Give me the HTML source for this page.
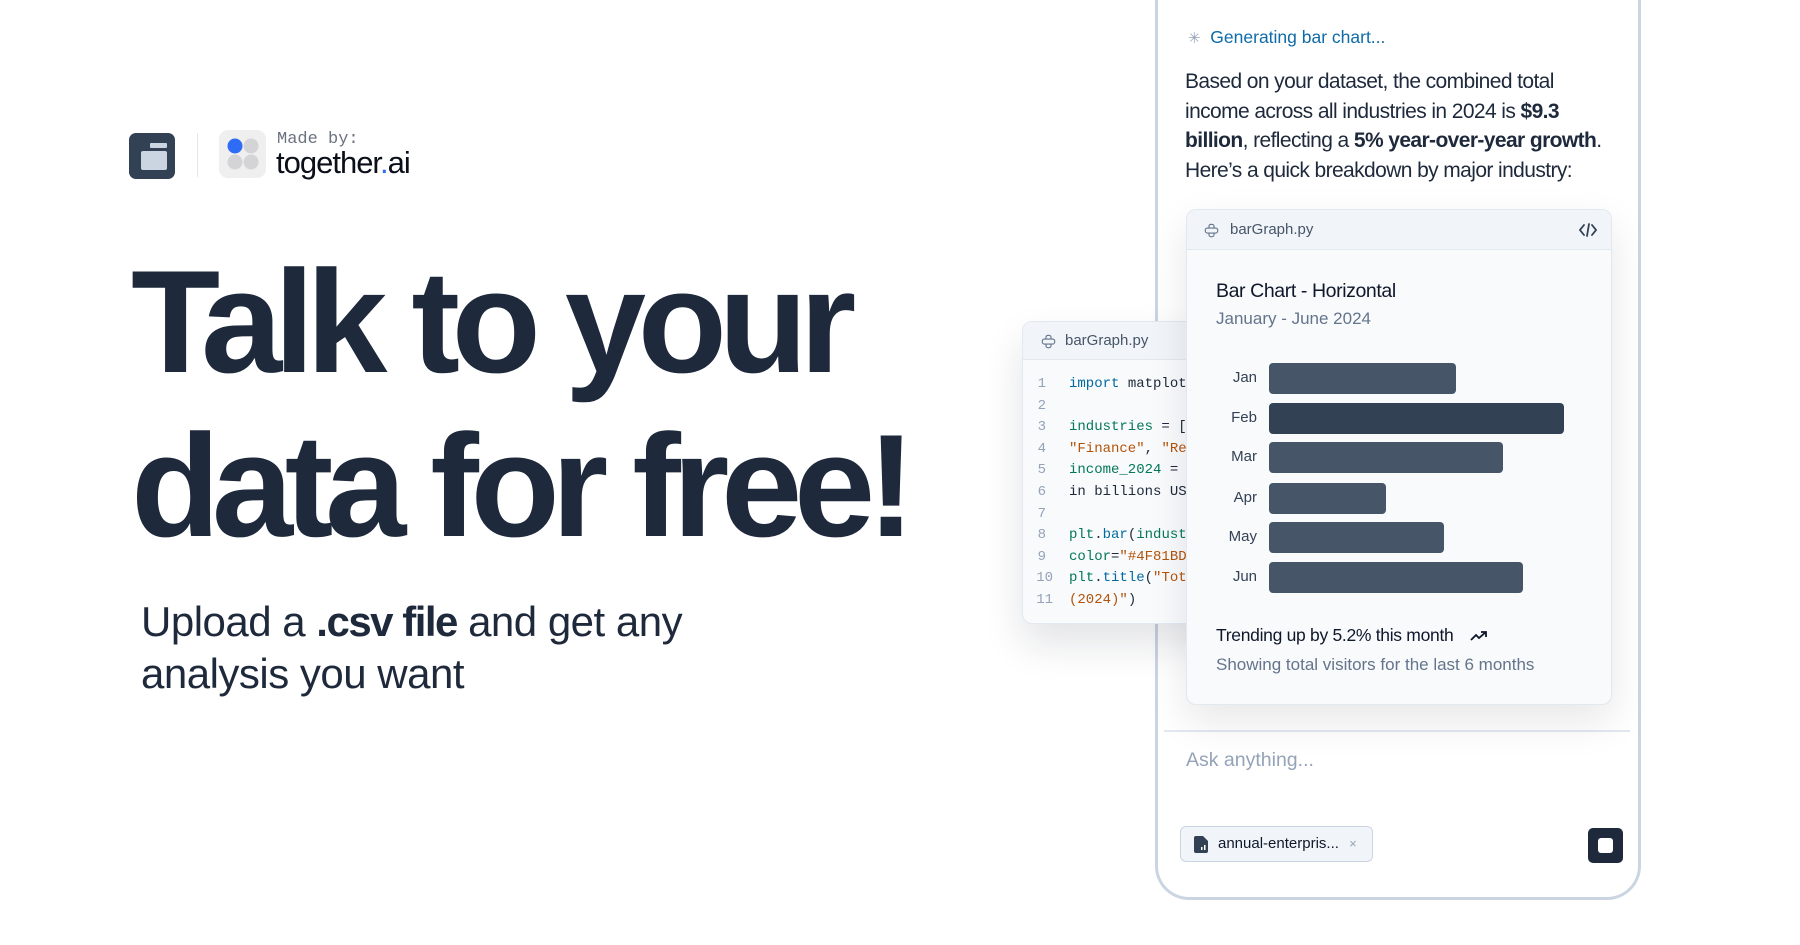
<!DOCTYPE html>
<html><head><meta charset="utf-8"><style>
*{margin:0;padding:0;box-sizing:border-box}
body{width:1800px;height:945px;background:#fff;font-family:"Liberation Sans",sans-serif;position:relative;overflow:hidden;color:#1e293b}
.abs{position:absolute}
.h1{left:131px;font-size:146px;font-weight:700;letter-spacing:-8.3px;color:#1e293b;line-height:1;white-space:nowrap}
.sub{left:141px;font-size:42px;color:#1e293b;line-height:52px;letter-spacing:-0.5px}
.phone{left:1155px;top:-40px;width:486px;height:940px;border:3px solid #cbd5e1;border-top:none;border-radius:0 0 34px 34px;background:#fff}
.code{left:1022px;top:321px;width:200px;height:303px;background:#f8fafc;border:1px solid #e2e8f0;border-radius:10px;box-shadow:0 20px 40px rgba(15,23,42,.12);overflow:hidden}
.code .hd{height:38px;background:#f1f5f9;border-bottom:1px solid #e2e8f0;font-size:15px;color:#475569;padding:10px 0 0 42px;position:relative}
.code pre{font-family:"Liberation Mono","DejaVu Sans Mono",monospace;font-size:14px;line-height:21.6px;position:absolute;top:52px;left:0;white-space:pre;color:#1e293b}
.ln{color:#94a3b8;display:inline-block;width:46px;text-align:right;padding-right:23px}
.k{color:#0369a1}.g{color:#047857}.s{color:#b45309}
.card{left:1186px;top:209px;width:426px;height:496px;background:#f8fafc;border:1px solid #e2e8f0;border-radius:10px;box-shadow:0 16px 40px rgba(15,23,42,.10);z-index:2;overflow:hidden}
.card .hd{height:40px;background:#f1f5f9;border-bottom:1px solid #e2e8f0;font-size:15px;color:#475569;padding:11px 0 0 43px;position:relative}
.bar{position:absolute;left:82px;height:31px;background:#475569;border-radius:4px}
.lbl{position:absolute;left:20px;width:50px;text-align:right;font-size:15px;color:#334155}
</style></head><body>
<svg class="abs" style="left:129px;top:133px" width="46" height="46" viewBox="0 0 46 46"><rect width="46" height="46" rx="7" fill="#334155"/><rect x="12" y="18" width="26" height="19" rx="2" fill="#cbd5e1"/><rect x="21" y="10" width="17" height="5" rx="1" fill="#cbd5e1"/></svg>
<div class="abs" style="left:197px;top:133px;width:1px;height:44px;background:#e2e8f0"></div>
<svg class="abs" style="left:219px;top:130px" width="47" height="48" viewBox="0 0 47 48"><rect width="47" height="48" rx="9" fill="#efefef"/><circle cx="16" cy="16" r="7.5" fill="#2f6cf6"/><circle cx="32" cy="16" r="7.5" fill="#d4d4d6"/><circle cx="16" cy="32" r="7.5" fill="#d4d4d6"/><circle cx="32" cy="32" r="7.5" fill="#d4d4d6"/></svg>
<div class="abs" style="left:277px;top:130px;font-family:'Liberation Mono',monospace;font-size:17px;color:#6b7280">Made by:</div>
<div class="abs" style="left:276px;top:145px;font-size:31px;color:#0b0f19;letter-spacing:-1px">together<span style="color:#2f6cf6">.</span>ai</div>
<div class="abs h1" style="top:249px">Talk to your</div>
<div class="abs h1" style="top:413px">data for free!</div>
<div class="abs sub" style="top:596px">Upload a <b style="letter-spacing:-1.5px">.csv file</b> and get any<br>analysis you want</div>

<div class="abs phone"></div>
<div class="abs" style="left:1188px;top:27px;font-size:17.5px;color:#0e6ba8"><span style="color:#94a3b8;font-size:15px">✳</span>&nbsp; Generating bar chart...</div>
<div class="abs" style="left:1185px;top:67px;width:420px;font-size:21px;line-height:29.5px;color:#1e293b;letter-spacing:-0.6px">Based on your dataset, the combined total income across all industries in 2024 is <b>$9.3 billion</b>, reflecting a <b>5% year-over-year growth</b>. Here’s a quick breakdown by major industry:</div>

<div class="abs code"><div class="hd"><svg class="abs" style="left:18px;top:12px" width="15" height="15" viewBox="0 0 24 24" fill="none" stroke="#64748b" stroke-width="1.8"><path d="M12 2c-4 0-4 2-4 3v3h8V5c0-2-2-3-4-3zM8 8H5c-2 0-3 2-3 4s1 4 3 4h3m8-8h3c2 0 3 2 3 4s-1 4-3 4h-3M8 16v3c0 2 2 3 4 3s4-1 4-3v-3H8"/></svg>barGraph.py</div>
<pre><span class="ln">1</span><span class="k">import</span> matplotlib
<span class="ln">2</span>
<span class="ln">3</span><span class="g">industries</span> = ["Te
<span class="ln">4</span><span class="s">"Finance"</span>, <span class="s">"Retail"</span>
<span class="ln">5</span><span class="g">income_2024</span> = [3.
<span class="ln">6</span>in billions USD
<span class="ln">7</span>
<span class="ln">8</span><span class="g">plt</span>.<span class="k">bar</span>(<span class="g">industrie</span>
<span class="ln">9</span><span class="g">color</span>=<span class="s">"#4F81BD"</span>)
<span class="ln" style="padding-right:16px">10</span><span class="g">plt</span>.<span class="k">title</span>(<span class="s">"Total</span>
<span class="ln" style="padding-right:16px">11</span><span class="s">(2024)"</span>)</pre></div>

<div class="abs card"><div class="hd"><svg class="abs" style="left:17px;top:13px" width="15" height="15" viewBox="0 0 24 24" fill="none" stroke="#64748b" stroke-width="1.8"><path d="M12 2c-4 0-4 2-4 3v3h8V5c0-2-2-3-4-3zM8 8H5c-2 0-3 2-3 4s1 4 3 4h3m8-8h3c2 0 3 2 3 4s-1 4-3 4h-3M8 16v3c0 2 2 3 4 3s4-1 4-3v-3H8"/></svg>barGraph.py
<svg class="abs" style="right:14px;top:12px" width="18" height="16" viewBox="0 0 18 16" fill="none" stroke="#334155" stroke-width="1.8" stroke-linecap="round"><path d="M5 3L1 8l4 5M13 3l4 5-4 5M10 2L8 14"/></svg></div>
<div class="abs" style="left:29px;top:70px;font-size:19.5px;color:#0f172a;letter-spacing:-0.4px">Bar Chart - Horizontal</div>
<div class="abs" style="left:29px;top:99px;font-size:17px;color:#64748b">January - June 2024</div>
<div class="lbl" style="top:159px">Jan</div><div class="bar" style="top:153px;width:187px"></div>
<div class="lbl" style="top:199px">Feb</div><div class="bar" style="top:193px;width:295px;background:#334155"></div>
<div class="lbl" style="top:238px">Mar</div><div class="bar" style="top:232px;width:234px"></div>
<div class="lbl" style="top:279px">Apr</div><div class="bar" style="top:273px;width:117px"></div>
<div class="lbl" style="top:318px">May</div><div class="bar" style="top:312px;width:175px"></div>
<div class="lbl" style="top:358px">Jun</div><div class="bar" style="top:352px;width:254px"></div>
<div class="abs" style="left:29px;top:415px;font-size:17.5px;color:#0f172a;letter-spacing:-0.3px">Trending up by 5.2% this month <svg style="margin-left:12px;vertical-align:-1px" width="18" height="12" viewBox="0 0 18 12" fill="none" stroke="#0f172a" stroke-width="1.8"><path d="M1 10l5-5 3 3 7-6M11 2h5v5"/></svg></div>
<div class="abs" style="left:29px;top:445px;font-size:17px;color:#64748b">Showing total visitors for the last 6 months</div>
</div>

<div class="abs" style="left:1164px;top:730px;width:466px;height:2px;background:#e2e8f0"></div>
<div class="abs" style="left:1186px;top:749px;font-size:19.5px;color:#94a3b8">Ask anything...</div>
<div class="abs" style="left:1180px;top:826px;width:193px;height:36px;border:1px solid #cbd5e1;border-radius:6px;background:#f1f5f9;font-size:15px;color:#0f172a;padding:8px 0 0 37px">
<svg class="abs" style="left:13px;top:9px" width="14" height="17" viewBox="0 0 14 17"><path d="M0 2a2 2 0 012-2h7l5 5v10a2 2 0 01-2 2H2a2 2 0 01-2-2z" fill="#334155"/><rect x="7" y="11" width="1.5" height="3" fill="#fff"/><rect x="10" y="9" width="1.5" height="5" fill="#fff"/></svg>annual-enterpris... <span style="color:#94a3b8;font-size:13px;margin-left:6px">×</span></div>
<div class="abs" style="left:1588px;top:828px;width:35px;height:35px;border-radius:5px;background:#1e293b"><div style="position:absolute;left:10px;top:10px;width:15px;height:15px;background:#fff;border-radius:3px"></div></div>
</body></html>
